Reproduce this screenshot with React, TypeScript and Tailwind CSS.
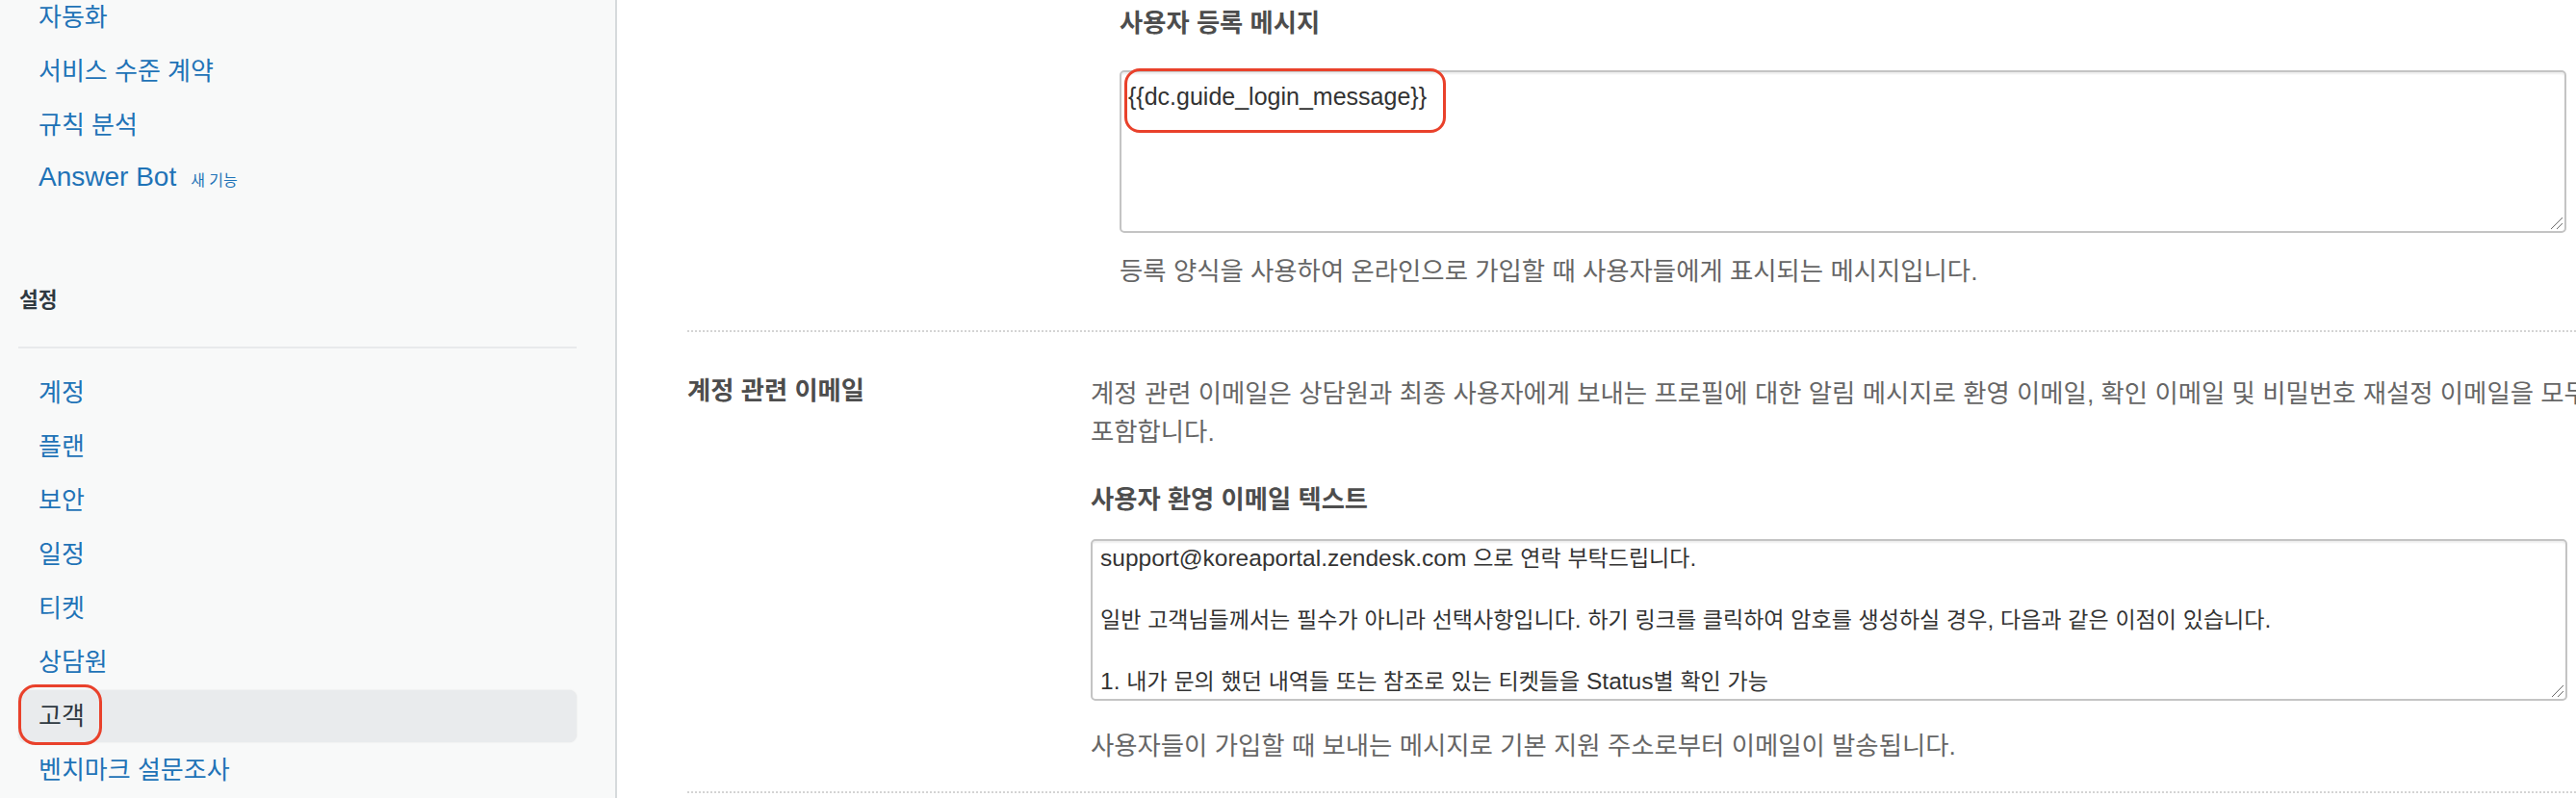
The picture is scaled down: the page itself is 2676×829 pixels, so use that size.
import React from "react";

const HANGUL = /([\u1100-\u11FF\u3130-\u318F\uAC00-\uD7AF]+)/;

function Mixed({ text }: { text: string }) {
  const parts = text.split(HANGUL);
  return (
    <>
      {parts.map((p, i) =>
        i % 2 === 1 ? (
          <span key={i} className="text-[23px] leading-[28px]">
            {p}
          </span>
        ) : (
          <React.Fragment key={i}>{p}</React.Fragment>
        )
      )}
    </>
  );
}

function NavItem({
  children,
  active,
}: {
  children: React.ReactNode;
  active?: boolean;
}) {
  return (
    <div className="h-[56px] py-px">
      {active ? (
        <div className="relative h-[54px] flex items-center pl-[21px] rounded-[8px] bg-[#e9ebed] text-[#2f3941] shadow-[0_0_2px_rgba(0,0,0,0.1)]">
          <span className="leading-[32px]">{children}</span>
          <div className="absolute left-0 top-[-6px] w-[87px] h-[63px] border-[3px] border-[#e9412b] rounded-[18px]" />
        </div>
      ) : (
        <div className="h-[54px] flex items-center pl-[21px] text-[#1f73b7]">
          <span className="leading-[32px] whitespace-nowrap">{children}</span>
        </div>
      )}
    </div>
  );
}

function ResizeHandle() {
  return (
    <svg
      className="absolute right-[1px] bottom-[1px]"
      width="14"
      height="14"
      viewBox="0 0 14 14"
    >
      <line x1="1" y1="13" x2="13" y2="1" stroke="#6b6b6b" strokeWidth="1" />
      <line x1="7" y1="13" x2="13" y2="7" stroke="#6b6b6b" strokeWidth="1" />
    </svg>
  );
}

export default function App() {
  const welcomeLines = [
    "support@koreaportal.zendesk.com 으로 연락 부탁드립니다.",
    "",
    "일반 고객님들께서는 필수가 아니라 선택사항입니다. 하기 링크를 클릭하여 암호를 생성하실 경우, 다음과 같은 이점이 있습니다.",
    "",
    "1. 내가 문의 했던 내역들 또는 참조로 있는 티켓들을 Status별 확인 가능",
  ];

  return (
    <div className="flex w-[2676px] h-[829px] overflow-hidden bg-white font-['Liberation_Sans','Noto_Sans_CJK_KR',sans-serif] antialiased">
      {/* Sidebar */}
      <aside className="w-[641px] shrink-0 h-full bg-[#f8f9f9] border-r-2 border-[#d6dadc] pl-[19px] pr-[40px] overflow-hidden text-[26px]">
        <div className="-mt-[10px]">
          <NavItem>자동화</NavItem>
          <NavItem>서비스 수준 계약</NavItem>
          <NavItem>규칙 분석</NavItem>
          <NavItem>
            <span className="text-[28px]">Answer Bot</span>
            <span className="ml-[15px] text-[16px]">새 기능</span>
          </NavItem>
        </div>
        <div className="mt-[82px] pl-px text-[21.5px] leading-[32px] font-bold text-[#2f3941]">
          설정
        </div>
        <div className="mt-[32px] h-[2px] bg-[#e8eaec]" />
        <div className="mt-[18px]">
          <NavItem>계정</NavItem>
          <NavItem>플랜</NavItem>
          <NavItem>보안</NavItem>
          <NavItem>일정</NavItem>
          <NavItem>티켓</NavItem>
          <NavItem>상담원</NavItem>
          <NavItem active>고객</NavItem>
          <NavItem>벤치마크 설문조사</NavItem>
        </div>
      </aside>

      {/* Main */}
      <main className="relative flex-1 min-w-0 h-full bg-white overflow-hidden">
        <div className="pl-[522px] pt-[8px]">
          <h3 className="text-[26.3px] leading-[32px] font-bold text-[#4d4d4d] whitespace-nowrap">
            사용자 등록 메시지
          </h3>
          <div className="relative mt-[33px] w-[1503px] h-[169px] border-2 border-[#c4c4c4] rounded-[5px] shadow-[inset_0_2px_2px_rgba(0,0,0,0.07)] pl-[7px] pt-[8.5px] text-[25px] leading-[32px] text-[#333]">
            {"{{dc.guide_login_message}}"}
            <div className="absolute left-[3px] top-[-4px] w-[334px] h-[67px] border-[3px] border-[#e9412b] rounded-[16px]" />
            <ResizeHandle />
          </div>
          <p className="mt-[24px] text-[26.4px] leading-[32px] text-[#666] whitespace-nowrap">
            등록 양식을 사용하여 온라인으로 가입할 때 사용자들에게 표시되는 메시지입니다.
          </p>
        </div>

        <div className="ml-[73px] mt-[45px] border-t-2 border-dotted border-[#d4d4d4]" />

        <section className="flex pl-[73px] pt-[44px]">
          <div className="w-[419px] shrink-0 text-[26.3px] leading-[35px] font-bold text-[#4d4d4d] whitespace-nowrap">
            계정 관련 이메일
          </div>
          <div className="w-[1534px] shrink-0">
            <p className="text-[26.4px] leading-[40px] text-[#666] whitespace-nowrap">
              계정 관련 이메일은 상담원과 최종 사용자에게 보내는 프로필에 대한 알림 메시지로 환영 이메일, 확인 이메일 및 비밀번호 재설정 이메일을 모두
              <br />
              포함합니다.
            </p>
            <h3 className="mt-[34px] text-[26.3px] leading-[32px] font-bold text-[#4d4d4d] whitespace-nowrap">
              사용자 환영 이메일 텍스트
            </h3>
            <div className="relative mt-[25px] w-[1534px] h-[168px] border-2 border-[#c4c4c4] rounded-[5px] shadow-[inset_0_2px_2px_rgba(0,0,0,0.07)] overflow-hidden pl-[8px] pt-[2px] text-[24.5px] leading-[32px] text-[#333]">
              {welcomeLines.map((l, i) => (
                <div key={i} className="h-[32px] whitespace-nowrap">
                  <Mixed text={l} />
                </div>
              ))}
              <ResizeHandle />
            </div>
            <p className="mt-[31px] text-[26.4px] leading-[32px] text-[#666] whitespace-nowrap">
              사용자들이 가입할 때 보내는 메시지로 기본 지원 주소로부터 이메일이 발송됩니다.
            </p>
          </div>
        </section>

        <div className="ml-[73px] mt-[31px] border-t-2 border-dotted border-[#d4d4d4]" />
      </main>
    </div>
  );
}
